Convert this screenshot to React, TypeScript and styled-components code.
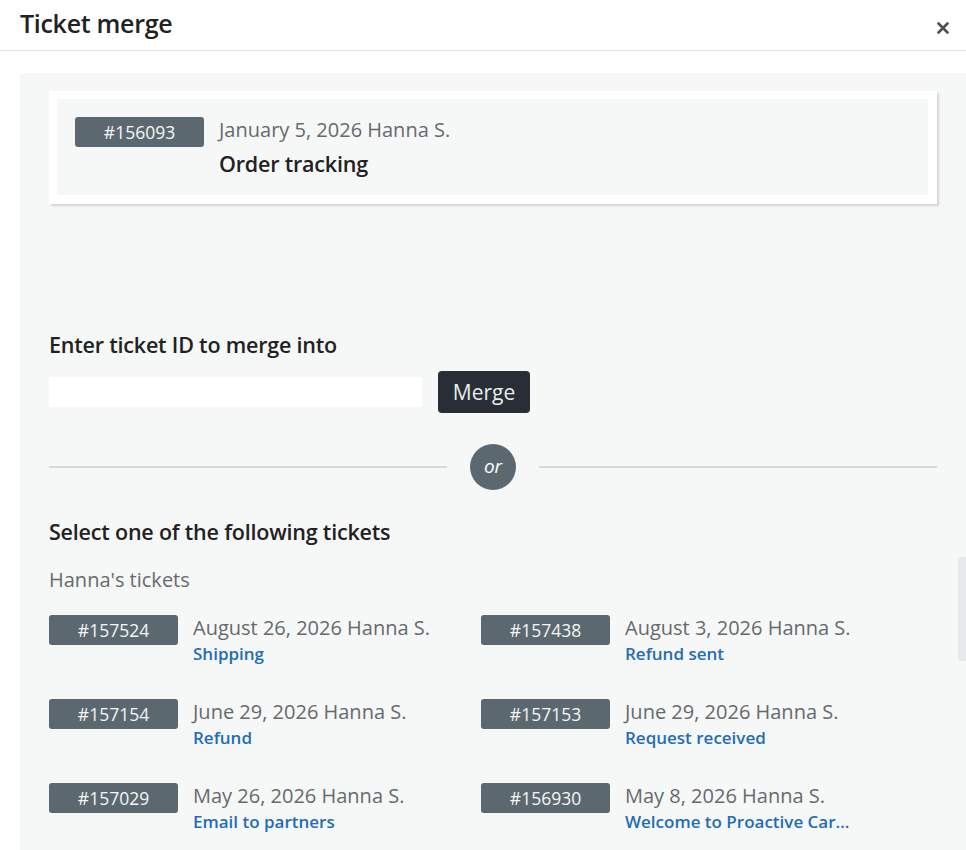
import styled, { createGlobalStyle } from 'styled-components';

const GlobalStyle = createGlobalStyle`
  html, body {
    margin: 0;
    padding: 0;
    background: #ffffff;
  }
  body {
    font-family: 'Open Sans', 'Noto Sans', sans-serif;
    color: #222;
  }
  * {
    box-sizing: border-box;
  }
`;

type Ticket = {
  id: string;
  date: string;
  subject: string;
};

const tickets: Ticket[] = [
  { id: '#157524', date: 'August 26, 2026 Hanna S.', subject: 'Shipping' },
  { id: '#157438', date: 'August 3, 2026 Hanna S.', subject: 'Refund sent' },
  { id: '#157154', date: 'June 29, 2026 Hanna S.', subject: 'Refund' },
  { id: '#157153', date: 'June 29, 2026 Hanna S.', subject: 'Request received' },
  { id: '#157029', date: 'May 26, 2026 Hanna S.', subject: 'Email to partners' },
  { id: '#156930', date: 'May 8, 2026 Hanna S.', subject: 'Welcome to Proactive Care program' },
];

const CloseIcon = () => (
  <svg width="12" height="12" viewBox="0 0 12 12" aria-hidden="true">
    <path d="M1.5 1.5 L10.5 10.5 M10.5 1.5 L1.5 10.5" stroke="#4a4f55" strokeWidth="2.6" strokeLinecap="round" />
  </svg>
);

export default function App() {
  return (
    <>
      <GlobalStyle />
      <Modal>
        <Header>
          <Title>Ticket merge</Title>
          <CloseButton aria-label="Close">
            <CloseIcon />
          </CloseButton>
        </Header>
        <Body>
          <Panel>
            <CurrentCard>
              <CurrentInner>
                <Badge>#156093</Badge>
                <TicketText>
                  <TicketDate>January 5, 2026 Hanna S.</TicketDate>
                  <CurrentSubject>Order tracking</CurrentSubject>
                </TicketText>
              </CurrentInner>
            </CurrentCard>

            <SectionTitle $top={127}>Enter ticket ID to merge into</SectionTitle>
            <MergeRow>
              <IdInput type="text" />
              <MergeButton>Merge</MergeButton>
            </MergeRow>

            <Divider>
              <Line />
              <OrBubble>or</OrBubble>
              <Line />
            </Divider>

            <SectionTitle $top={28}>Select one of the following tickets</SectionTitle>
            <GroupLabel>Hanna's tickets</GroupLabel>
            <TicketGrid>
              {tickets.map((t) => (
                <TicketItem key={t.id}>
                  <Badge>{t.id}</Badge>
                  <TicketText>
                    <TicketDate>{t.date}</TicketDate>
                    <TicketLink href="#">{t.subject}</TicketLink>
                  </TicketText>
                </TicketItem>
              ))}
            </TicketGrid>
          </Panel>
          <ScrollThumb />
        </Body>
      </Modal>
    </>
  );
}

const Modal = styled.div`
  width: 966px;
  height: 850px;
  overflow: hidden;
  background: #fff;
  display: flex;
  flex-direction: column;
`;

const Header = styled.div`
  height: 51px;
  flex-shrink: 0;
  display: flex;
  align-items: center;
  justify-content: space-between;
  padding: 0 17px 4px 20px;
  border-bottom: 1px solid #e6e6e6;
`;

const Title = styled.h1`
  margin: 0;
  font-size: 25px;
  font-weight: 600;
  color: #222;
  letter-spacing: -0.3px;
`;

const CloseButton = styled.button`
  border: 0;
  background: transparent;
  padding: 0;
  margin-top: 9px;
  width: 12px;
  height: 12px;
  display: flex;
  cursor: pointer;
`;

const Body = styled.div`
  position: relative;
  flex: 1;
  padding: 22px 0 0 20px;
  overflow: hidden;
`;

const Panel = styled.div`
  background: #f6f7f7;
  min-height: 100%;
  padding: 18px 29px 40px 29px;
`;

const ScrollThumb = styled.div`
  position: absolute;
  right: 0;
  top: 506px;
  width: 8px;
  height: 104px;
  border-radius: 4px 0 0 4px;
  background: #e7e8ea;
`;

const CurrentCard = styled.div`
  background: #fff;
  padding: 8px 9px 9px 8px;
  box-shadow: 2px 2px 2px rgba(0, 0, 0, 0.14);
`;

const CurrentInner = styled.div`
  background: #f6f7f7;
  padding: 18px 18px 17px;
  display: flex;
  align-items: flex-start;
  gap: 15px;
`;

const Badge = styled.span`
  flex-shrink: 0;
  width: 129px;
  height: 30px;
  border-radius: 3px;
  background: #5c6870;
  color: #f4f6f7;
  font-size: 17.5px;
  display: flex;
  align-items: center;
  justify-content: center;
`;

const TicketText = styled.div`
  display: flex;
  flex-direction: column;
  min-width: 0;
`;

const TicketDate = styled.div`
  font-size: 20px;
  line-height: 28px;
  color: #666a6e;
  margin-top: -1px;
`;

const CurrentSubject = styled.div`
  font-size: 21.5px;
  line-height: 28px;
  font-weight: 600;
  color: #222;
  margin-top: 6px;
  letter-spacing: -0.2px;
`;

const SectionTitle = styled.h2<{ $top: number }>`
  margin: ${(p) => p.$top}px 0 0;
  font-size: 21.5px;
  line-height: 28px;
  font-weight: 600;
  color: #222;
  letter-spacing: -0.2px;
`;

const MergeRow = styled.div`
  display: flex;
  align-items: center;
  gap: 16px;
  margin-top: 12px;
`;

const IdInput = styled.input`
  width: 373px;
  height: 30px;
  border: 0;
  outline: none;
  background: #fff;
  padding: 0 8px;
  font-size: 16px;
`;

const MergeButton = styled.button`
  width: 92px;
  height: 42px;
  border: 0;
  border-radius: 4px;
  background: #272e35;
  color: #e9ecee;
  font-family: inherit;
  font-size: 21px;
  cursor: pointer;
`;

const Divider = styled.div`
  display: flex;
  align-items: center;
  gap: 23px;
  margin-top: 31px;
`;

const Line = styled.div`
  flex: 1;
  height: 2px;
  background: #d9d9dc;
`;

const OrBubble = styled.div`
  width: 46px;
  height: 46px;
  border-radius: 50%;
  background: #5c6870;
  color: #fff;
  font-style: italic;
  font-size: 19px;
  display: flex;
  align-items: center;
  justify-content: center;
  padding-bottom: 2px;
`;

const GroupLabel = styled.div`
  margin-top: 21px;
  font-size: 20px;
  line-height: 26px;
  color: #666a6e;
`;

const TicketGrid = styled.div`
  display: grid;
  grid-template-columns: 432px 1fr;
  row-gap: 33px;
  margin-top: 22px;
`;

const TicketItem = styled.div`
  display: flex;
  align-items: flex-start;
  gap: 15px;
  min-width: 0;
`;

const TicketLink = styled.a`
  font-size: 17px;
  line-height: 24px;
  font-weight: 600;
  color: #1f6db5;
  text-decoration: none;
  max-width: 228px;
  white-space: nowrap;
  overflow: hidden;
  text-overflow: ellipsis;
`;
